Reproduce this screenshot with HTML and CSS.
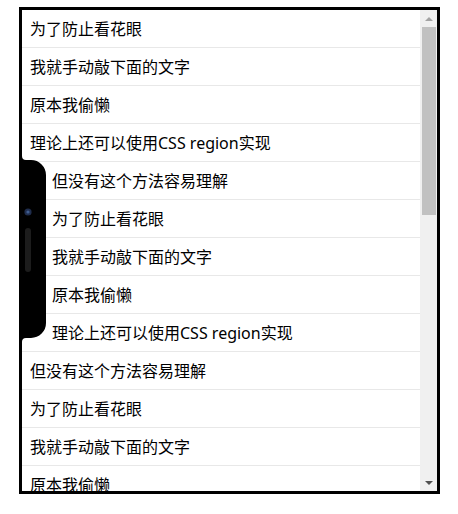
FILE: index.html
```html
<!DOCTYPE html>
<html lang="zh-CN">
<head>
<meta charset="utf-8">
<title>safe-area</title>
<link rel="stylesheet" href="styles.css">
</head>
<body>
<div class="frame">
  <ul class="list">
    <li class="row">为了防止看花眼</li>
    <li class="row">我就手动敲下面的文字</li>
    <li class="row">原本我偷懒</li>
    <li class="row">理论上还可以使用CSS region实现</li>
    <li class="row safe">但没有这个方法容易理解</li>
    <li class="row safe">为了防止看花眼</li>
    <li class="row safe">我就手动敲下面的文字</li>
    <li class="row safe">原本我偷懒</li>
    <li class="row safe">理论上还可以使用CSS region实现</li>
    <li class="row">但没有这个方法容易理解</li>
    <li class="row">为了防止看花眼</li>
    <li class="row">我就手动敲下面的文字</li>
    <li class="row">原本我偷懒</li>
    <li class="row">理论上还可以使用CSS region实现</li>
    <li class="row">但没有这个方法容易理解</li>
  </ul>
  <div class="scrollbar">
    <div class="sb-btn"><span class="arrow-up"></span></div>
    <div class="sb-track"><div class="sb-thumb"></div></div>
    <div class="sb-btn"><span class="arrow-down"></span></div>
  </div>
  <svg class="notch" width="28" height="178" viewBox="0 0 28 178">
    <path d="M3 -4 Q3 0 7 0 H12 A15 15 0 0 1 27 15 V163 A15 15 0 0 1 12 178 H7 Q3 178 3 182 H0 V-4 Z" fill="#000"/>
    <circle cx="9" cy="52" r="3.6" fill="#1f2d4d"/>
    <circle cx="9" cy="52" r="1.6" fill="#3f5d90"/>
    <rect x="6" y="68" width="6" height="44" rx="3" fill="#1c1c1c"/>
  </svg>
</div>
</body>
</html>
```

FILE: styles.css
```css
html, body {
  margin: 0;
  padding: 0;
  background: #fff;
}

body {
  font-family: "Noto Sans", "Noto Sans CJK SC", sans-serif;
  font-size: 16px;
  color: #000;
}

.frame {
  position: relative;
  display: flex;
  width: 415px;
  height: 481px;
  border: 3px solid #000;
  margin: 7px 0 0 19px;
}

.list {
  flex: 1;
  margin: 0;
  padding: 0;
  list-style: none;
  overflow: hidden;
}

.row {
  display: flex;
  align-items: center;
  height: 37px;
  padding-left: 8px;
  border-bottom: 1px solid #e8e8e8;
  white-space: nowrap;
  line-height: 20px;
}

.row.safe {
  padding-left: 30px;
}

.scrollbar {
  width: 17px;
  flex: none;
  display: flex;
  flex-direction: column;
  background: #f0f0f0;
}

.sb-btn {
  height: 17px;
  display: flex;
  align-items: center;
  justify-content: center;
}

.arrow-up {
  width: 0;
  height: 0;
  border-left: 4px solid transparent;
  border-right: 4px solid transparent;
  border-bottom: 4px solid #a3a3a3;
}

.arrow-down {
  width: 0;
  height: 0;
  border-left: 4px solid transparent;
  border-right: 4px solid transparent;
  border-top: 4px solid #505050;
}

.sb-track {
  flex: 1;
}

.sb-thumb {
  height: 188px;
  margin: 0 1px 0 2px;
  background: #c1c1c1;
}

.notch {
  position: absolute;
  left: -3px;
  top: 150px;
  overflow: visible;
}
```
